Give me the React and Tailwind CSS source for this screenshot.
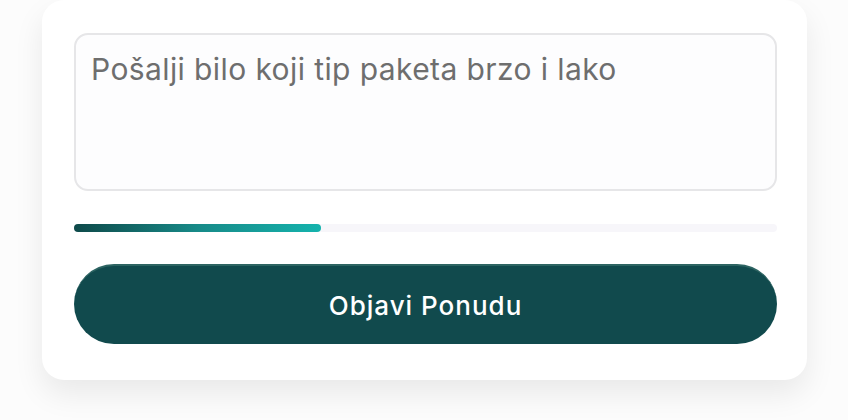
export default function App() {
  return (
    <div
      className="w-[848px] h-[420px] bg-[#fcfcfc] overflow-hidden"
      style={{ fontFamily: "Inter, 'Noto Sans', sans-serif" }}
    >
      <div className="ml-[42px] w-[765px] h-[380px] bg-white rounded-[22px] shadow-[0_14px_30px_rgba(0,0,0,0.08)] pt-[33px] pl-[32px] pr-[30px] flex flex-col">
        {/* Text area */}
        <textarea
          className="w-full h-[158px] resize-none rounded-[14px] border-2 border-[#e6e6e8] bg-[#fdfdfe] px-[15px] pt-[14px] text-[30px] leading-[40px] text-[#333] placeholder:text-[#6e6e6e] outline-none tracking-[0.4px]"
          placeholder="Pošalji bilo koji tip paketa brzo i lako"
        />

        {/* Progress */}
        <div className="mt-[33px] h-[8px] w-full rounded-full bg-[#f7f6fa]">
          <div
            className="h-full rounded-full bg-gradient-to-r from-[#0e4a4a] via-[#178a88] to-[#14b3ad]"
            style={{ width: "35.2%" }}
          />
        </div>

        {/* Button */}
        <button className="mt-[32px] h-[80px] w-full rounded-full bg-[#114a4d] border-t-2 border-[#2d6462] text-white text-[26px] font-medium tracking-[1px]">
          Objavi Ponudu
        </button>
      </div>
    </div>
  );
}
